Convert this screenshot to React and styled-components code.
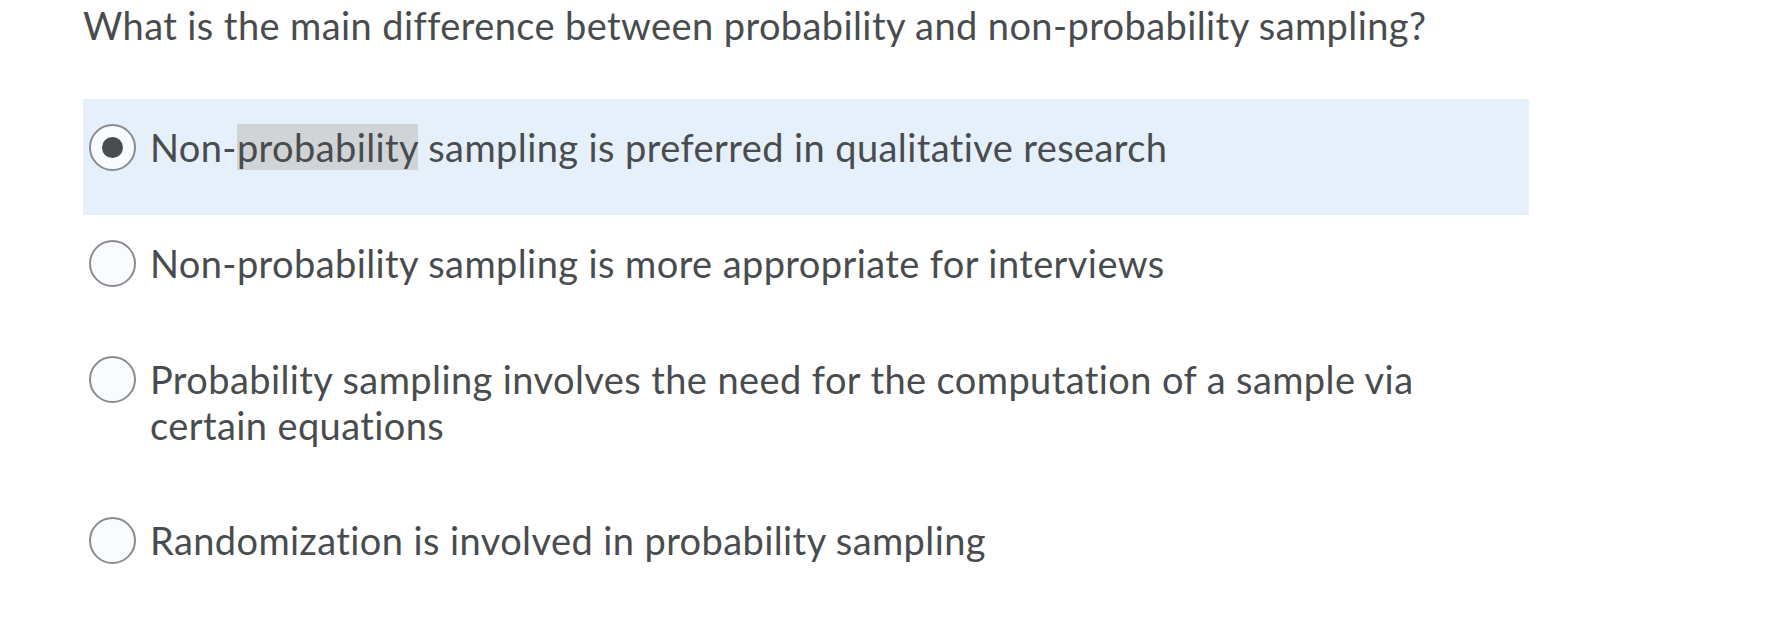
import React from "react";
import styled, { createGlobalStyle } from "styled-components";

const GlobalStyle = createGlobalStyle`
  html, body {
    margin: 0;
    padding: 0;
    background: #ffffff;
  }
  body {
    font-family: Lato, "Open Sans", sans-serif;
    color: #494c4e;
    font-variant-ligatures: none;
    font-feature-settings: "liga" 0, "clig" 0;
  }
`;

const options = [
  { id: 1, text: "Non-probability sampling is preferred in qualitative research", checked: true },
  { id: 2, text: "Non-probability sampling is more appropriate for interviews" },
  { id: 3, text: "Probability sampling involves the need for the computation of a sample via certain equations" },
  { id: 4, text: "Randomization is involved in probability sampling" },
];

export default function App() {
  return (
    <>
      <GlobalStyle />
      <Page>
        <Question>What is the main difference between probability and non-probability sampling?</Question>
        <OptionList>
          {options.map((o) => (
            <OptionRow key={o.id} $checked={o.checked}>
              <Radio $checked={o.checked} />
              <OptionText>
                {o.checked ? (
                  <>
                    Non-<Selected>probability</Selected> sampling is preferred in qualitative research
                  </>
                ) : (
                  o.text
                )}
              </OptionText>
            </OptionRow>
          ))}
        </OptionList>
      </Page>
    </>
  );
}

const Page = styled.div`
  padding: 0 257px 0 83px;
  width: 1446px;
`;

const Question = styled.div`
  font-size: 38px;
  line-height: 46px;
  letter-spacing: 0.4px;
  margin: 2px 0 51px 0;
`;

const OptionList = styled.div`
  display: flex;
  flex-direction: column;
`;

const OptionRow = styled.label`
  display: flex;
  align-items: flex-start;
  gap: 14px;
  padding: 25px 60px 44px 6px;
  background: ${(p) => (p.$checked ? "#e6f0fb" : "transparent")};
`;

const Radio = styled.span`
  box-sizing: border-box;
  flex: none;
  width: 47px;
  height: 47px;
  border-radius: 50%;
  border: 2px solid #898c8f;
  background: #f9fbff;
  display: flex;
  align-items: center;
  justify-content: center;

  &::after {
    content: "";
    display: ${(p) => (p.$checked ? "block" : "none")};
    width: 21px;
    height: 21px;
    border-radius: 50%;
    background: #494c4e;
  }
`;

const OptionText = styled.div`
  font-size: 38px;
  line-height: 46px;
  letter-spacing: 0.4px;
`;

const Selected = styled.span`
  background: #d1d4d6;
`;
